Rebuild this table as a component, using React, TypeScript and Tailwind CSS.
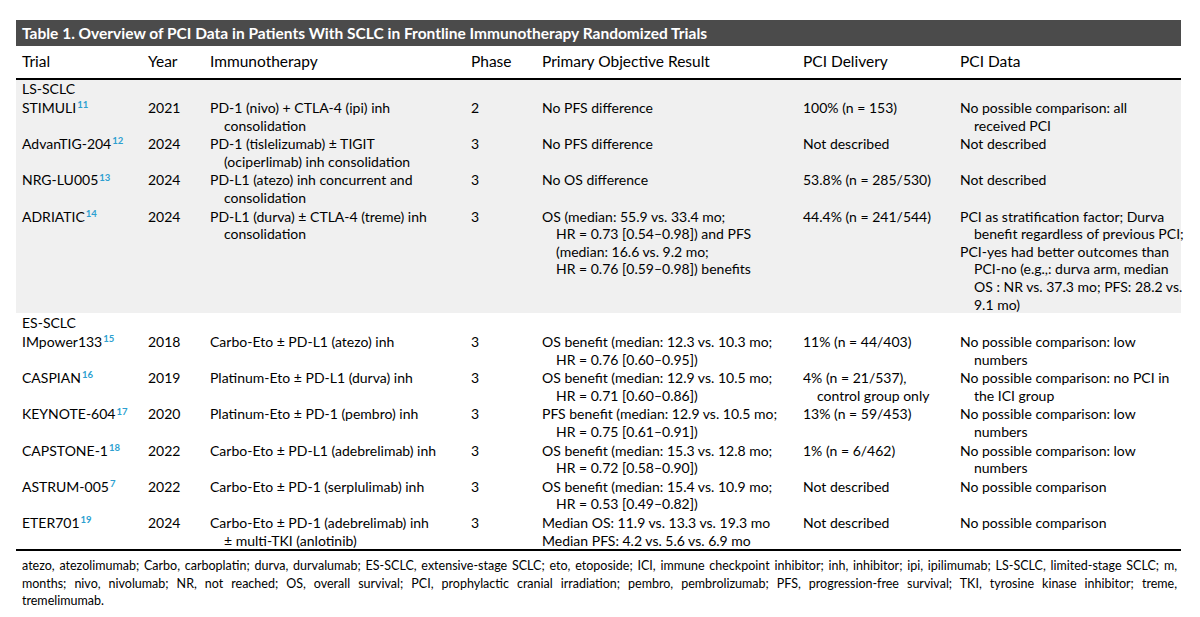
type Cell = string[][];

type Row = {
  trial: string;
  ref: string;
  year: string;
  immuno: Cell;
  phase: string;
  result: Cell;
  delivery: Cell;
  data: Cell;
};

const lsRows: Row[] = [
  {
    trial: "STIMULI",
    ref: "11",
    year: "2021",
    immuno: [["PD-1 (nivo) + CTLA-4 (ipi) inh", "consolidation"]],
    phase: "2",
    result: [["No PFS difference"]],
    delivery: [["100% (n = 153)"]],
    data: [["No possible comparison: all", "received PCI"]],
  },
  {
    trial: "AdvanTIG-204",
    ref: "12",
    year: "2024",
    immuno: [["PD-1 (tislelizumab) ± TIGIT", "(ociperlimab) inh consolidation"]],
    phase: "3",
    result: [["No PFS difference"]],
    delivery: [["Not described"]],
    data: [["Not described"]],
  },
  {
    trial: "NRG-LU005",
    ref: "13",
    year: "2024",
    immuno: [["PD-L1 (atezo) inh concurrent and", "consolidation"]],
    phase: "3",
    result: [["No OS difference"]],
    delivery: [["53.8% (n = 285/530)"]],
    data: [["Not described"]],
  },
  {
    trial: "ADRIATIC",
    ref: "14",
    year: "2024",
    immuno: [["PD-L1 (durva) ± CTLA-4 (treme) inh", "consolidation"]],
    phase: "3",
    result: [
      [
        "OS (median: 55.9 vs. 33.4 mo;",
        "HR = 0.73 [0.54–0.98]) and PFS",
        "(median: 16.6 vs. 9.2 mo;",
        "HR = 0.76 [0.59–0.98]) benefits",
      ],
    ],
    delivery: [["44.4% (n = 241/544)"]],
    data: [
      ["PCI as stratification factor; Durva", "benefit regardless of previous PCI;"],
      [
        "PCI-yes had better outcomes than",
        "PCI-no (e.g.,: durva arm, median",
        "OS : NR vs. 37.3 mo; PFS: 28.2 vs.",
        "9.1 mo)",
      ],
    ],
  },
];

const esRows: Row[] = [
  {
    trial: "IMpower133",
    ref: "15",
    year: "2018",
    immuno: [["Carbo-Eto ± PD-L1 (atezo) inh"]],
    phase: "3",
    result: [["OS benefit (median: 12.3 vs. 10.3 mo;", "HR = 0.76 [0.60–0.95])"]],
    delivery: [["11% (n = 44/403)"]],
    data: [["No possible comparison: low", "numbers"]],
  },
  {
    trial: "CASPIAN",
    ref: "16",
    year: "2019",
    immuno: [["Platinum-Eto ± PD-L1 (durva) inh"]],
    phase: "3",
    result: [["OS benefit (median: 12.9 vs. 10.5 mo;", "HR = 0.71 [0.60–0.86])"]],
    delivery: [["4% (n = 21/537),", "control group only"]],
    data: [["No possible comparison: no PCI in", "the ICI group"]],
  },
  {
    trial: "KEYNOTE-604",
    ref: "17",
    year: "2020",
    immuno: [["Platinum-Eto ± PD-1 (pembro) inh"]],
    phase: "3",
    result: [["PFS benefit (median: 12.9 vs. 10.5 mo;", "HR = 0.75 [0.61–0.91])"]],
    delivery: [["13% (n = 59/453)"]],
    data: [["No possible comparison: low", "numbers"]],
  },
  {
    trial: "CAPSTONE-1",
    ref: "18",
    year: "2022",
    immuno: [["Carbo-Eto ± PD-L1 (adebrelimab) inh"]],
    phase: "3",
    result: [["OS benefit (median: 15.3 vs. 12.8 mo;", "HR = 0.72 [0.58–0.90])"]],
    delivery: [["1% (n = 6/462)"]],
    data: [["No possible comparison: low", "numbers"]],
  },
  {
    trial: "ASTRUM-005",
    ref: "7",
    year: "2022",
    immuno: [["Carbo-Eto ± PD-1 (serplulimab) inh"]],
    phase: "3",
    result: [["OS benefit (median: 15.4 vs. 10.9 mo;", "HR = 0.53 [0.49–0.82])"]],
    delivery: [["Not described"]],
    data: [["No possible comparison"]],
  },
  {
    trial: "ETER701",
    ref: "19",
    year: "2024",
    immuno: [["Carbo-Eto ± PD-1 (adebrelimab) inh", "± multi-TKI (anlotinib)"]],
    phase: "3",
    result: [["Median OS: 11.9 vs. 13.3 vs. 19.3 mo"], ["Median PFS: 4.2 vs. 5.6 vs. 6.9 mo"]],
    delivery: [["Not described"]],
    data: [["No possible comparison"]],
  },
];

const grid = "grid grid-cols-[126px_62px_261px_71px_261px_157px_1fr]";

function Lines({ cell }: { cell: Cell }) {
  return (
    <div className="whitespace-nowrap">
      {cell.map((para, p) =>
        para.map((line, i) => (
          <div key={`${p}-${i}`} className={i === 0 ? "" : "pl-[14px]"}>
            {line}
          </div>
        ))
      )}
    </div>
  );
}

function TableRow({ row }: { row: Row }) {
  return (
    <div className={`${grid} pb-[1px]`}>
      <div className="whitespace-nowrap">
        {row.trial}
        <sup className="text-[9.5px] font-bold text-[#2d9fd0] ml-[1px]">{row.ref}</sup>
      </div>
      <div>{row.year}</div>
      <Lines cell={row.immuno} />
      <div>{row.phase}</div>
      <Lines cell={row.result} />
      <Lines cell={row.delivery} />
      <Lines cell={row.data} />
    </div>
  );
}

export default function App() {
  return (
    <main
      className="bg-white text-black w-[1200px] h-[617px] pt-[20px] pl-[16px]"
      style={{ fontFamily: "Lato, 'Liberation Sans', sans-serif" }}
    >
      <div className="w-[1165px]">
        {/* TITLE */}
        <div className="bg-[#4b4b4b] text-white font-bold text-[15.5px] h-[26px] leading-[26px] pl-[6px]">
          Table 1. Overview of PCI Data in Patients With SCLC in Frontline Immunotherapy Randomized Trials
        </div>

        {/* HEADER */}
        <div className={`${grid} h-[34px] items-center pl-[6px] text-[15.5px] border-b-2 border-black`}>
          <div>Trial</div>
          <div>Year</div>
          <div>Immunotherapy</div>
          <div>Phase</div>
          <div>Primary Objective Result</div>
          <div>PCI Delivery</div>
          <div>PCI Data</div>
        </div>

        {/* LS-SCLC */}
        <div className="bg-[#f0f0f0] pl-[6px] text-[14px] leading-[17.6px] h-[233px]">
          <div className="h-[19px] leading-[18px]">LS-SCLC</div>
          {lsRows.map((r) => (
            <TableRow key={r.trial} row={r} />
          ))}
        </div>

        {/* ES-SCLC */}
        <div className="pl-[6px] pt-[1px] text-[14px] leading-[17.6px] h-[238px] border-b-2 border-black">
          <div className="h-[19px] leading-[18px]">ES-SCLC</div>
          {esRows.map((r) => (
            <TableRow key={r.trial} row={r} />
          ))}
        </div>

        {/* FOOTNOTE */}
        <div className="pl-[6px] pr-[4px] pt-[6px] text-[12.5px] leading-[17.5px]">
          <div className="text-justify whitespace-nowrap [text-align-last:justify]">
            atezo, atezolimumab; Carbo, carboplatin; durva, durvalumab; ES-SCLC, extensive-stage SCLC; eto, etoposide; ICI, immune checkpoint inhibitor; inh, inhibitor; ipi, ipilimumab; LS-SCLC, limited-stage SCLC; m,
          </div>
          <div className="text-justify [text-align-last:justify]">
            months; nivo, nivolumab; NR, not reached; OS, overall survival; PCI, prophylactic cranial irradiation; pembro, pembrolizumab; PFS, progression-free survival; TKI, tyrosine kinase inhibitor; treme,
          </div>
          <div>tremelimumab.</div>
        </div>
      </div>
    </main>
  );
}
